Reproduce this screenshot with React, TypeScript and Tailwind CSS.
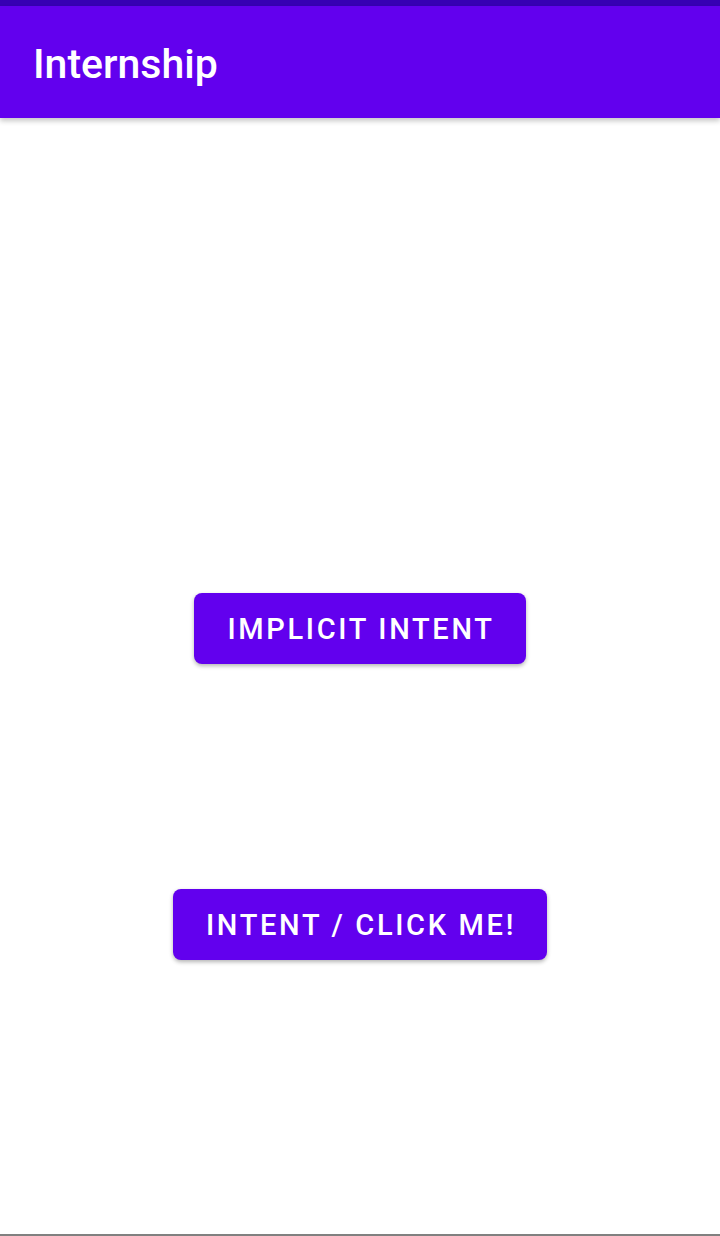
export default function App() {
  return (
    <div className="h-[1236px] w-[720px] bg-white flex flex-col font-['Roboto',sans-serif] border-b-2 border-[#808080] overflow-hidden">
      <div className="h-[6px] bg-[#3700B3]" />
      <header className="h-[112px] bg-[#6200EE] flex items-center pl-[33px] pt-[5px] shadow-[0_3px_5px_rgba(0,0,0,0.22)] relative z-10">
        <h1 className="text-white text-[41px] font-medium leading-none">Internship</h1>
      </header>

      <main className="flex flex-col items-center">
        <button className="mt-[475px] h-[71px] pl-[33px] pr-[31px] pt-[3px] rounded-[8px] bg-[#6200EE] text-white text-[29px] font-medium uppercase tracking-[0.092em] shadow-[0_2px_4px_rgba(0,0,0,0.3)]">
          Implicit Intent
        </button>
        <button className="mt-[225px] h-[71px] pl-[33px] pr-[31px] pt-[3px] rounded-[8px] bg-[#6200EE] text-white text-[29px] font-medium uppercase tracking-[0.092em] shadow-[0_2px_4px_rgba(0,0,0,0.3)]">
          Intent / Click me!
        </button>
      </main>
    </div>
  );
}
